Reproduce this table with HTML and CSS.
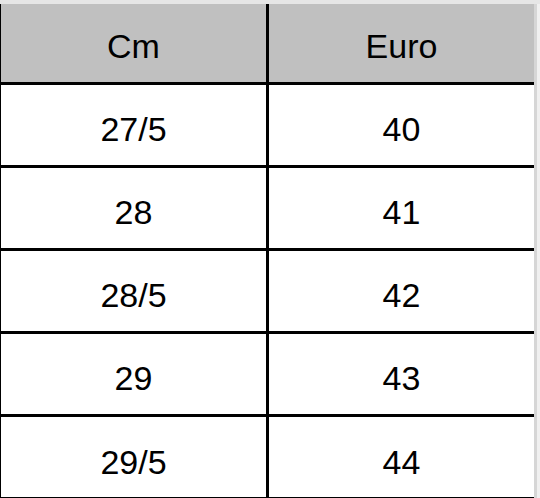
FILE: index.html
```html
<!DOCTYPE html>
<html>
<head>
<meta charset="utf-8">
<link rel="stylesheet" href="styles.css">
</head>
<body>
<div class="page">
  <div class="top-strip"></div>
  <div class="main">
    <div class="table">
      <div class="cell head c1">Cm</div>
      <div class="cell head c2">Euro</div>
      <div class="cell c1">27/5</div>
      <div class="cell c2">40</div>
      <div class="cell c1">28</div>
      <div class="cell c2">41</div>
      <div class="cell c1">28/5</div>
      <div class="cell c2">42</div>
      <div class="cell c1">29</div>
      <div class="cell c2">43</div>
      <div class="cell c1 last">29/5</div>
      <div class="cell c2 last">44</div>
    </div>
    <div class="edge-dark"></div>
    <div class="edge-light"></div>
  </div>
</div>
</body>
</html>
```

FILE: styles.css
```css
html, body {
  margin: 0;
  padding: 0;
  background: #ffffff;
}
.page {
  width: 540px;
  height: 498px;
  display: flex;
  flex-direction: column;
  font-family: "Liberation Sans", Arial, sans-serif;
  color: #000;
}
.top-strip {
  height: 4px;
  flex: none;
  background: #e6e6e6;
}
.main {
  display: flex;
  height: 494px;
}
.table {
  width: 534px;
  box-sizing: border-box;
  border-left: 1px solid #000;
  display: grid;
  grid-template-columns: 268px 265px;
  grid-template-rows: 81px 83px 83px 83px 83px 81px;
  background: #fff;
}
.cell {
  box-sizing: border-box;
  display: flex;
  align-items: center;
  justify-content: center;
  font-size: 34px;
  line-height: 1;
  border-bottom: 3px solid #000;
  padding-top: 8px;
}
.cell.c1 {
  border-right: 3px solid #000;
}
.cell.head {
  background: #c0c0c0;
  padding-top: 6px;
}
.cell.last {
  border-bottom: 1px solid #000;
  padding-top: 10px;
}
.edge-dark {
  width: 3px;
  background: #d6d6d6;
}
.edge-light {
  width: 3px;
  background: #f0f0f0;
}
```
